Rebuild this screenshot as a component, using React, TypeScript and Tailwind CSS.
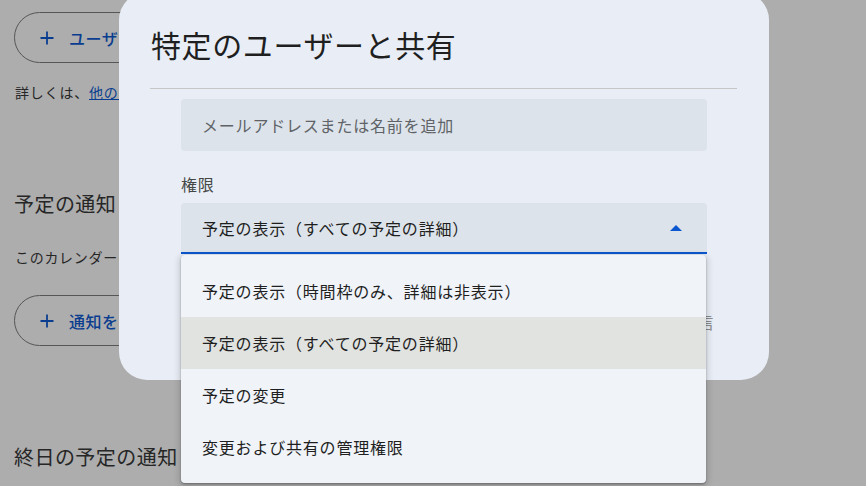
import React from "react";

const font = { fontFamily: '"Noto Sans CJK JP", "Noto Sans", Roboto, sans-serif' };

function Plus({ className }: { className?: string }) {
  return (
    <svg className={className} width="14" height="14" viewBox="0 0 14 14" fill="none">
      <path d="M7 0.5V13.5M0.5 7H13.5" stroke="currentColor" strokeWidth="1.8" />
    </svg>
  );
}

export default function App() {
  const items = [
    "予定の表示（時間枠のみ、詳細は非表示）",
    "予定の表示（すべての予定の詳細）",
    "予定の変更",
    "変更および共有の管理権限",
  ];
  return (
    <div className="relative w-[866px] h-[486px] overflow-hidden bg-[#adadad] text-[#262626]" style={font}>
      {/* background page */}
      <div className="flex flex-col pl-[14px] pt-[12px]">
        <div className="flex items-center h-[51px] w-[260px] rounded-full border border-[#565656] pl-[25px] gap-[15px] text-[#0a3d8f] text-[16px] font-medium tracking-[0.5px]">
          <Plus />
          <span>ユーザーを追加</span>
        </div>
        <div className="mt-[19px] h-[20px] flex items-center text-[14px] leading-[20px] pl-[1px] tracking-[0.8px]">
          詳しくは、<span className="text-[#0a3d8f] underline">他のユーザーとカレンダーを共有</span>
        </div>
        <div className="mt-[88px] h-[28px] flex items-center text-[20px] leading-[28px] tracking-[0.45px]">予定の通知</div>
        <div className="mt-[29px] h-[20px] flex items-center text-[14px] leading-[20px] pl-[1px] tracking-[0.7px]">
          このカレンダーの予定に関する通知を受け取る
        </div>
        <div className="mt-[28px] flex items-center h-[51px] w-[240px] rounded-full border border-[#565656] pl-[25px] gap-[15px] text-[#0a3d8f] text-[16px] font-medium tracking-[0.5px]">
          <Plus />
          <span>通知を追加</span>
        </div>
        <div className="mt-[97px] h-[28px] flex items-center text-[20px] leading-[28px] tracking-[0.45px]">終日の予定の通知</div>
      </div>

      {/* dialog */}
      <div className="absolute left-[119px] top-[-8px] w-[650px] h-[388px] rounded-[28px] bg-[#e9eef6] px-[31px] pt-[34px]">
        <div className="text-[30px] leading-[36px] text-[#1f1f1f] h-[36px] pl-[1px] tracking-[0.6px]">特定のユーザーと共有</div>
        <div className="mt-[26px] h-px bg-[#c4c7c5] mr-[1px]" />
        <div className="px-[31px] pt-[10px] tracking-[0.8px]">
          <div className="h-[52px] rounded-[4px] bg-[#dde3ea] flex items-center px-[21px] text-[16px] text-[#5f6368]">
            メールアドレスまたは名前を追加
          </div>
          <div className="mt-[21px] h-[24px] leading-[24px] text-[16px] text-[#444746]">権限</div>
          <div className="mt-[7px] h-[51px] rounded-t-[4px] bg-[#dde3ea] border-b-2 border-[#0b57d0] flex items-center justify-between pl-[21px] pr-[25px] text-[16px] text-[#1f1f1f]">
            <span>予定の表示（すべての予定の詳細）</span>
            <svg width="12" height="6" viewBox="0 0 12 6">
              <path d="M0 6L6 0L12 6Z" fill="#0b57d0" />
            </svg>
          </div>
        </div>
        <div className="flex justify-end gap-[16px] mt-[56px] pr-[24px] text-[16px] text-[#8a8c8e] tracking-[0.8px]">
          <span>キャンセル</span>
          <span>送信</span>
        </div>
      </div>

      {/* dropdown menu */}
      <div className="absolute left-[181px] top-[255px] w-[525px] rounded-[4px] bg-[#f0f4f9] py-[10px] tracking-[0.8px] shadow-[0_2px_6px_2px_rgba(0,0,0,0.15),0_1px_2px_rgba(0,0,0,0.3)]">
        {items.map((t, i) => (
          <div
            key={t}
            className={
              "h-[52px] flex items-center pl-[21px] text-[16px] text-[#1f1f1f] " +
              (i === 1 ? "bg-[#e1e3e1]" : "")
            }
          >
            {t}
          </div>
        ))}
      </div>
    </div>
  );
}
